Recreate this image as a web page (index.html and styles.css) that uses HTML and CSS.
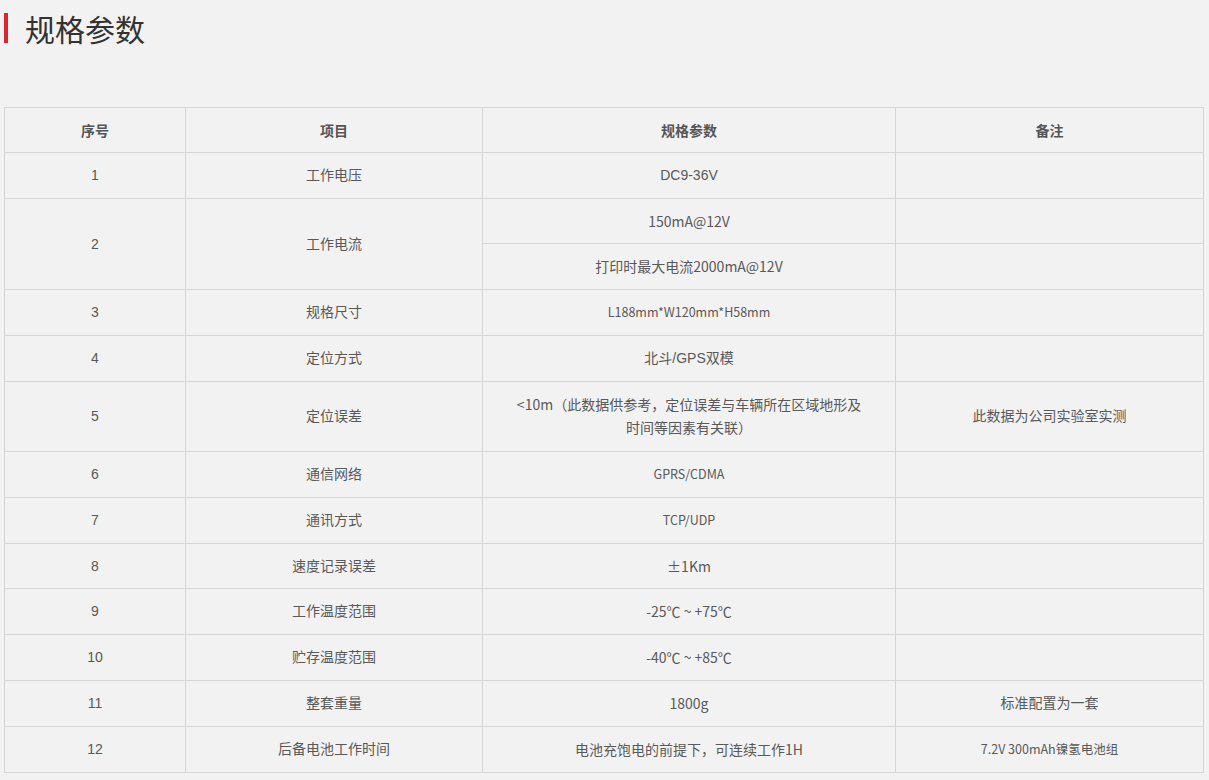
FILE: index.html
```html
<!DOCTYPE html>
<html lang="zh-CN">
<head>
<meta charset="utf-8">
<title>规格参数</title>
<link rel="stylesheet" href="styles.css">
</head>
<body>
<div class="page">
  <h2 class="title"><span class="bar"></span>规格参数</h2>
  <table class="spec">
    <colgroup>
      <col class="c1"><col class="c2"><col class="c3"><col class="c4">
    </colgroup>
    <thead>
      <tr><th>序号</th><th>项目</th><th>规格参数</th><th>备注</th></tr>
    </thead>
    <tbody>
      <tr><td>1</td><td>工作电压</td><td>DC9-36V</td><td></td></tr>
      <tr><td rowspan="2">2</td><td rowspan="2">工作电流</td><td class="yh">150mA@12V</td><td></td></tr>
      <tr><td class="yh">打印时最大电流2000mA@12V</td><td></td></tr>
      <tr><td>3</td><td>规格尺寸</td><td class="yh sm">L188mm*W120mm*H58mm</td><td></td></tr>
      <tr><td>4</td><td>定位方式</td><td>北斗/GPS双模</td><td></td></tr>
      <tr class="multi"><td>5</td><td>定位误差</td><td class="yh">&lt;10m（此数据供参考，定位误差与车辆所在区域地形及<br>时间等因素有关联）</td><td>此数据为公司实验室实测</td></tr>
      <tr><td>6</td><td>通信网络</td><td class="yh sm">GPRS/CDMA</td><td></td></tr>
      <tr><td>7</td><td>通讯方式</td><td class="yh sm">TCP/UDP</td><td></td></tr>
      <tr><td>8</td><td>速度记录误差</td><td class="yh">±1Km</td><td></td></tr>
      <tr><td>9</td><td>工作温度范围</td><td class="yh">-25℃ ~ +75℃</td><td></td></tr>
      <tr><td>10</td><td>贮存温度范围</td><td class="yh">-40℃ ~ +85℃</td><td></td></tr>
      <tr><td>11</td><td>整套重量</td><td class="yh">1800g</td><td>标准配置为一套</td></tr>
      <tr><td>12</td><td>后备电池工作时间</td><td class="yh">电池充饱电的前提下，可连续工作1H</td><td class="yh sm">7.2V 300mAh镍氢电池组</td></tr>
    </tbody>
  </table>
</div>
</body>
</html>
```

FILE: styles.css
```css
html, body {
  margin: 0;
  padding: 0;
  background: #f2f2f2;
}

body {
  font-family: "Liberation Sans", "Noto Sans CJK SC", sans-serif;
  color: #595959;
  font-size: 14px;
}

.page {
  padding: 12px 5px 0 4px;
}

.title {
  display: flex;
  align-items: center;
  gap: 17px;
  margin: 0;
  height: 32px;
  font-family: "Noto Sans CJK SC", sans-serif;
  font-size: 30px;
  font-weight: normal;
  line-height: 32px;
  color: #333;
}

.title .bar {
  display: block;
  width: 4px;
  height: 30px;
  background: #d9272e;
}

.spec {
  margin-top: 63px;
  width: 1199px;
  border-collapse: collapse;
  table-layout: fixed;
}

.spec .c1 { width: 181px; }
.spec .c2 { width: 297px; }
.spec .c3 { width: 413px; }
.spec .c4 { width: 308px; }

.spec th,
.spec td {
  border: 1px solid #d6d6d6;
  text-align: center;
  vertical-align: middle;
  padding: 11px 10px;
  line-height: 22.83px;
}

.spec .multi td {
  line-height: 23.5px;
}

.spec th {
  padding: 11px 10px 10px;
  font-family: "Noto Sans CJK SC", sans-serif;
  font-weight: bold;
  font-size: 14px;
  color: #555;
}

.spec td.yh {
  font-family: "Noto Sans CJK SC", sans-serif;
  font-size: 14px;
}

.spec td.sm {
  font-size: 12.5px;
}
```
